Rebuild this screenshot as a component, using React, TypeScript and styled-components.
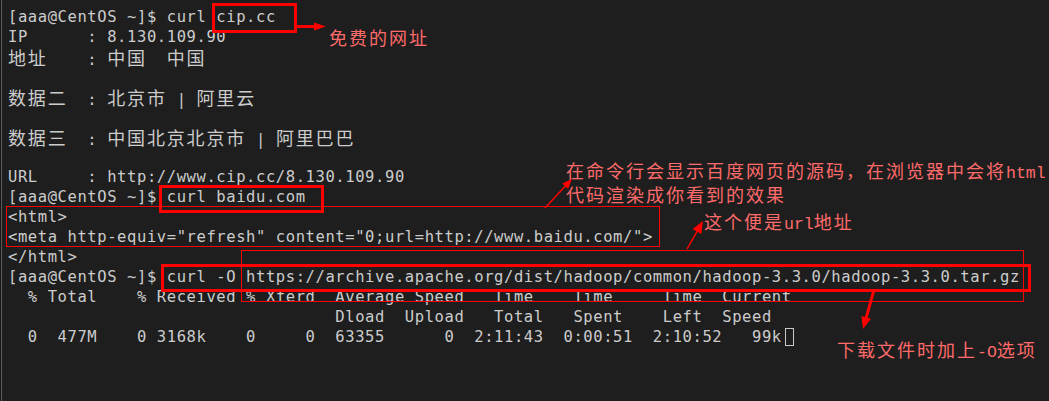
import React from "react";
import styled, { createGlobalStyle } from "styled-components";

const COL = 9.92;
const MONO_SIZE = 15.5;
const CJK_SIZE = 18;
const RED = "#ff0000";
const NOTE = "#ff6a6a";

const GlobalStyle = createGlobalStyle`
  html, body { margin: 0; padding: 0; background: #1e1e1e; }
  body { overflow: hidden; }
`;

const Screen = styled.div`
  position: relative;
  width: 1049px;
  height: 401px;
  box-sizing: border-box;
  background: #1e1e1e;
  border-left: 1px solid #161616;
  box-shadow: inset 1px 0 0 #5a5a5a;
  overflow: hidden;
`;

const Terminal = styled.div`
  display: flex;
  flex-direction: column;
  padding: 7px 0 0 7px;
  color: #cccccc;
  font-family: "DejaVu Sans Mono", monospace;
  font-size: ${MONO_SIZE}px;
  letter-spacing: ${COL - MONO_SIZE * 0.60205}px;
`;

const Line = styled.div`
  height: 20px;
  line-height: 20px;
  white-space: pre;
`;

const Wide = styled.span`
  font-family: "Noto Sans CJK SC", sans-serif;
  font-size: ${CJK_SIZE}px;
  letter-spacing: ${2 * COL - CJK_SIZE}px;
`;

const Cursor = styled.span`
  display: inline-block;
  box-sizing: border-box;
  width: 9px;
  height: 18px;
  margin-left: 3px;
  border: 1px solid #c8c8c8;
  vertical-align: -4px;
`;

const Box = styled.div<{ $x: number; $y: number; $w: number; $h: number; $thick?: boolean }>`
  position: absolute;
  left: ${(p) => p.$x}px;
  top: ${(p) => p.$y}px;
  width: ${(p) => p.$w}px;
  height: ${(p) => p.$h}px;
  box-sizing: border-box;
  border: ${(p) => (p.$thick ? 3 : 1)}px solid ${RED};
`;

const Note = styled.div<{ $x: number; $y: number }>`
  position: absolute;
  left: ${(p) => p.$x}px;
  top: ${(p) => p.$y}px;
  color: ${NOTE};
  font-family: "Noto Sans CJK SC", sans-serif;
  font-size: 18px;
  letter-spacing: 2px;
  line-height: 20px;
  white-space: pre;
`;

const Latin = styled.span`
  font-family: "Liberation Mono", monospace;
  font-size: 16.5px;
  letter-spacing: 0;
`;

const ArrowLayer = styled.svg`
  position: absolute;
  left: 0;
  top: 0;
  width: 1049px;
  height: 401px;
  pointer-events: none;
`;

const CJK_RE = /([\u3000-\u9fff\uff00-\uffef]+)/;

function Text({ s }: { s: string }) {
  const parts = s.split(CJK_RE);
  return (
    <>
      {parts.map((p, i) =>
        p === "" ? null : CJK_RE.test(p) ? <Wide key={i}>{p}</Wide> : <React.Fragment key={i}>{p}</React.Fragment>
      )}
    </>
  );
}

const lines: string[] = [
  "[aaa@CentOS ~]$ curl cip.cc",
  "IP      : 8.130.109.90",
  "地址    : 中国  中国",
  "",
  "数据二  : 北京市 | 阿里云",
  "",
  "数据三  : 中国北京北京市 | 阿里巴巴",
  "",
  "URL     : http://www.cip.cc/8.130.109.90",
  "[aaa@CentOS ~]$ curl baidu.com",
  "<html>",
  '<meta http-equiv="refresh" content="0;url=http://www.baidu.com/">',
  "</html>",
  "[aaa@CentOS ~]$ curl -O https://archive.apache.org/dist/hadoop/common/hadoop-3.3.0/hadoop-3.3.0.tar.gz",
  "  % Total    % Received % Xferd  Average Speed   Time    Time     Time  Current",
  "                                 Dload  Upload   Total   Spent    Left  Speed",
  "  0  477M    0 3168k    0     0  63355      0  2:11:43  0:00:51  2:10:52   99k",
];

type ArrowSpec = { x1: number; y1: number; x2: number; y2: number; w: number; len: number; half: number };

const arrows: ArrowSpec[] = [
  { x1: 296, y1: 26.5, x2: 325, y2: 26.5, w: 3, len: 12, half: 4 },
  { x1: 544, y1: 208, x2: 571, y2: 179, w: 1.5, len: 10, half: 4 },
  { x1: 686, y1: 249, x2: 702, y2: 221, w: 1.5, len: 12, half: 5 },
  { x1: 873, y1: 290, x2: 862, y2: 329, w: 3, len: 12, half: 5 },
];

function Arrow({ a }: { a: ArrowSpec }) {
  const dx = a.x2 - a.x1;
  const dy = a.y2 - a.y1;
  const d = Math.hypot(dx, dy);
  const ux = dx / d;
  const uy = dy / d;
  const bx = a.x2 - ux * a.len;
  const by = a.y2 - uy * a.len;
  const px = -uy;
  const py = ux;
  const pts = `${a.x2},${a.y2} ${bx + px * a.half},${by + py * a.half} ${bx - px * a.half},${by - py * a.half}`;
  return (
    <g>
      <line x1={a.x1} y1={a.y1} x2={bx + ux * 1} y2={by + uy * 1} stroke={RED} strokeWidth={a.w} />
      <polygon points={pts} fill={RED} />
    </g>
  );
}

export default function App() {
  return (
    <>
      <GlobalStyle />
      <Screen>
        <Terminal>
          {lines.map((l, i) => (
            <Line key={i}>
              <Text s={l} />
              {i === lines.length - 1 && <Cursor />}
            </Line>
          ))}
        </Terminal>

        <Box $x={211} $y={3} $w={85} $h={30} $thick />
        <Box $x={158} $y={185} $w={165} $h={28} $thick />
        <Box $x={5} $y={206} $w={654} $h={41} />
        <Box $x={240} $y={250} $w={783} $h={52} />
        <Box $x={160} $y={264} $w={870} $h={28} $thick />

        <ArrowLayer viewBox="0 0 1049 401">
          {arrows.map((a, i) => (
            <Arrow key={i} a={a} />
          ))}
        </ArrowLayer>

        <Note $x={328} $y={27}>免费的网址</Note>
        <Note $x={565} $y={160}>
          在命令行会显示百度网页的源码，在浏览器中会将<Latin>html</Latin>
          {"\n"}代码渲染成你看到的效果
        </Note>
        <Note $x={703} $y={211}>
          这个便是<Latin>url</Latin>地址
        </Note>
        <Note $x={836} $y={339}>
          下载文件时加上<Latin>-O</Latin>选项
        </Note>
      </Screen>
    </>
  );
}
